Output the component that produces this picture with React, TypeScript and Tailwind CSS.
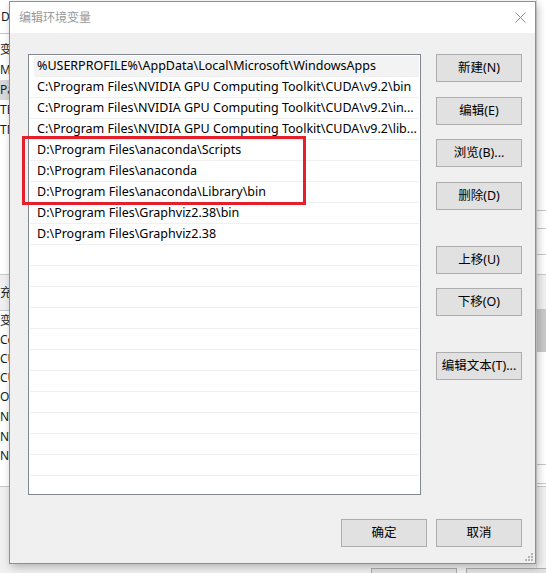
import React from "react";

const rows = [
  "%USERPROFILE%\\AppData\\Local\\Microsoft\\WindowsApps",
  "C:\\Program Files\\NVIDIA GPU Computing Toolkit\\CUDA\\v9.2\\bin",
  "C:\\Program Files\\NVIDIA GPU Computing Toolkit\\CUDA\\v9.2\\in...",
  "C:\\Program Files\\NVIDIA GPU Computing Toolkit\\CUDA\\v9.2\\lib...",
  "D:\\Program Files\\anaconda\\Scripts",
  "D:\\Program Files\\anaconda",
  "D:\\Program Files\\anaconda\\Library\\bin",
  "D:\\Program Files\\Graphviz2.38\\bin",
  "D:\\Program Files\\Graphviz2.38",
];

const emptyRows = Array.from({ length: 12 }, (_, i) => i);

function WinButton({ label, className }: { label: string; className?: string }) {
  return (
    <button
      className={
        "h-[28px] w-[86px] border border-[#adadad] bg-[#e1e1e1] text-[12.5px] text-black leading-none flex items-center justify-center " +
        (className || "")
      }
    >
      {label}
    </button>
  );
}

function BackWindow() {
  // the window sitting behind the dialog, only its edges show
  return (
    <div className="absolute inset-0 bg-[#f0f0f0]">
      <div className="h-[34px] bg-white border-b border-[#c8c8c8] flex items-center pl-[1px] text-[12px] text-[#1a1a1a]">
        DG
      </div>
      <div className="bg-white h-[240px] flex flex-col text-[12px] text-[#1a1a1a] leading-none pt-[6px]">
        <div className="h-[20px] flex items-center">变</div>
        <div className="h-[20px] flex items-center">M</div>
        <div className="h-[20px] flex items-center bg-[#d9d9d9] w-[9px]">Pa</div>
        <div className="h-[20px] flex items-center">TE</div>
        <div className="h-[20px] flex items-center">TM</div>
      </div>
      <div className="h-[37px] border-y border-[#c8c8c8] flex items-center text-[12px] text-[#1a1a1a]">
        充
      </div>
      <div className="bg-white h-[175px] flex flex-col text-[12px] text-[#1a1a1a] leading-none">
        <div className="h-[19px] flex items-center">变</div>
        <div className="h-[19px] flex items-center">Co</div>
        <div className="h-[19px] flex items-center">CU</div>
        <div className="h-[19px] flex items-center">CU</div>
        <div className="h-[20px] flex items-center">Or</div>
        <div className="h-[20px] flex items-center">NV</div>
        <div className="h-[19px] flex items-center">NV</div>
        <div className="h-[19px] flex items-center">NV</div>
      </div>
      <div className="border-t border-[#c8c8c8]" />
      <div className="absolute right-0 top-0 w-[10px] h-full border-l border-[#dcdcdc] flex flex-col">
        <div className="h-[36px] bg-white" />
        <div className="h-[175px] border-b border-[#c8c8c8]" />
        <div className="h-[18px] border-b border-[#c8c8c8]" />
        <div className="h-[26px] border-b border-[#c8c8c8]" />
        <div className="h-[55px] border-b border-[#c8c8c8]" />
        <div className="h-[42px] bg-[#c9c9c9]" />
        <div className="h-[113px] border-b border-[#c8c8c8]" />
        <div className="h-[19px] border-b border-[#c8c8c8]" />
      </div>
      <div className="absolute left-[371px] top-[568px] flex gap-[9px]">
        <div className="h-[28px] w-[86px] border border-[#adadad] bg-[#e1e1e1]" />
        <div className="h-[28px] w-[86px] border border-[#adadad] bg-[#e1e1e1]" />
      </div>
    </div>
  );
}

export default function App() {
  return (
    <div
      className="relative w-[546px] h-[573px] overflow-hidden"
      style={{ fontFamily: '"Noto Sans", "Noto Sans CJK SC", sans-serif' }}
    >
      <BackWindow />

      <div className="absolute left-[9px] top-[1px] w-[527px] h-[563px] border border-[#8f8f8f] bg-[#f0f0f0] shadow-[2px_3px_8px_rgba(0,0,0,0.25)] flex flex-col">
        <div className="h-[31px] bg-white flex items-center justify-between pl-[9px] pr-[9px]">
          <span className="text-[12px] text-[#9a9a9a]">编辑环境变量</span>
          <svg width="11" height="11" viewBox="0 0 11 11">
            <path d="M0.5 0.5 L10.5 10.5 M10.5 0.5 L0.5 10.5" stroke="#8a8a8a" strokeWidth="1" />
          </svg>
        </div>

        <div className="relative flex-1 flex flex-col pl-[18px] pr-[13px] pt-[21px]">
          <div className="flex gap-[15px]">
            <div className="w-[393px] h-[441px] border border-[#828790] bg-white overflow-hidden p-[1px]">
              {rows.map((r, i) => (
                <div
                  key={i}
                  className={
                    "h-[21px] border-b border-[#f0f0f0] flex items-center text-[12.5px] text-black whitespace-nowrap overflow-hidden " +
                    (i === 0 ? "bg-[#f3f3f3] ml-[4px] pl-[3px]" : "pl-[7px]")
                  }
                >
                  {r}
                </div>
              ))}
              {emptyRows.map((i) => (
                <div key={"e" + i} className="h-[21px] border-b border-[#f0f0f0]" />
              ))}
            </div>

            <div className="flex flex-col">
              <WinButton label="新建(N)" />
              <WinButton label="编辑(E)" className="mt-[15px]" />
              <WinButton label="浏览(B)..." className="mt-[14px]" />
              <WinButton label="删除(D)" className="mt-[15px]" />
              <WinButton label="上移(U)" className="mt-[36px]" />
              <WinButton label="下移(O)" className="mt-[14px]" />
              <WinButton label="编辑文本(T)..." className="mt-[36px]" />
            </div>
          </div>

          <div className="flex justify-end gap-[9px] mt-[24px]">
            <WinButton label="确定" />
            <WinButton label="取消" />
          </div>

          {/* red annotation box */}
          <div className="absolute left-[12px] top-[103px] w-[284px] h-[69px] border-[3px] border-[#e5202a]" />

          <svg className="absolute right-[2px] bottom-[2px]" width="8" height="8" viewBox="0 0 8 8">
            <rect x="6" y="0" width="2" height="2" fill="#b4b4b4" />
            <rect x="3" y="3" width="2" height="2" fill="#b4b4b4" />
            <rect x="6" y="3" width="2" height="2" fill="#b4b4b4" />
            <rect x="0" y="6" width="2" height="2" fill="#b4b4b4" />
            <rect x="3" y="6" width="2" height="2" fill="#b4b4b4" />
            <rect x="6" y="6" width="2" height="2" fill="#b4b4b4" />
          </svg>
        </div>
      </div>
    </div>
  );
}
